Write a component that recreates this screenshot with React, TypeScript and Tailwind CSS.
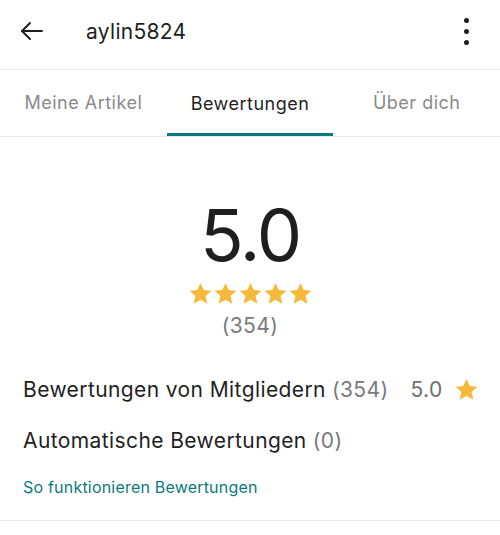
import React from "react";

const Star = ({ size }: { size: number }) => (
  <svg width={size} height={size} viewBox="0 0 24 24" aria-hidden className="shrink-0">
    <path
      d="M12 1.8l3.1 6.9 7.4.7-5.6 5 1.7 7.4L12 17.9l-6.6 3.9 1.7-7.4-5.6-5 7.4-.7z"
      fill="#f6b93b"
    />
  </svg>
);

export default function App() {
  return (
    <div className="w-[500px] h-[535px] bg-white overflow-hidden" style={{ fontFamily: "Inter, 'Noto Sans', sans-serif" }}>
      {/* Header */}
      <div className="h-[70px] flex items-center border-b border-[#e8e8e8] pb-[7px]">
        <div className="w-[86px] pl-[20px] flex items-center">
          <svg width="24" height="24" viewBox="0 0 24 24" fill="none" stroke="#1f1f1f" strokeWidth="2" strokeLinecap="round" strokeLinejoin="round">
            <path d="M22 12H2" />
            <path d="M10 4l-8 8 8 8" />
          </svg>
        </div>
        <div className="flex-1 text-[21px] tracking-[0.3px] text-[#1f1f1f] leading-none">aylin5824</div>
        <div className="w-[68px] flex flex-col items-center gap-[6px]">
          <span className="w-[5px] h-[5px] rounded-full bg-[#1f1f1f]" />
          <span className="w-[5px] h-[5px] rounded-full bg-[#1f1f1f]" />
          <span className="w-[5px] h-[5px] rounded-full bg-[#1f1f1f]" />
        </div>
      </div>
      {/* Tabs */}
      <div className="flex h-[67px] border-b border-[#e8e8e8]">
        <div className="flex-1 flex items-center justify-center text-[18px] tracking-[0.5px] text-[#8a8a8a] pb-[1px]">Meine Artikel</div>
        <div className="flex-1 flex flex-col">
          <div className="flex-1 flex items-center justify-center text-[18px] tracking-[0.5px] text-[#1f1f1f] pt-[3px]">Bewertungen</div>
          <div className="h-[3px] bg-[#0b7a80]" />
        </div>
        <div className="flex-1 flex items-center justify-center text-[18px] tracking-[0.5px] text-[#8a8a8a] pb-[1px]">Über dich</div>
      </div>
      {/* Rating */}
      <div className="flex flex-col items-center pt-[62px]">
        <div className="text-[72px] leading-none tracking-[-2px] text-[#1f1f1f]">5.0</div>
        <div className="flex mt-[10px]">
          <Star size={25} />
          <Star size={25} />
          <Star size={25} />
          <Star size={25} />
          <Star size={25} />
        </div>
        <div className="text-[21px] tracking-[0.4px] text-[#7a7a7a] mt-[9px] leading-none">(354)</div>
      </div>
      {/* Rows */}
      <div className="px-[23px] pt-[41px]">
        <div className="flex items-center whitespace-nowrap text-[21px] tracking-[0.4px] leading-none">
          <span className="shrink-0 text-[#1f1f1f]">Bewertungen von Mitgliedern</span>
          <span className="shrink-0 text-[#7a7a7a] ml-[6px]">(354)</span>
          <span className="shrink-0 text-[#6f6f6f] ml-[22px]">5.0</span>
          <span className="shrink-0 ml-[11px] flex"><Star size={25} /></span>
        </div>
        <div className="flex items-center whitespace-nowrap text-[21px] tracking-[0.4px] leading-none mt-[28px]">
          <span className="text-[#1f1f1f]">Automatische Bewertungen</span>
          <span className="text-[#7a7a7a] ml-[6px]">(0)</span>
        </div>
        <div className="text-[16px] tracking-[0.2px] text-[#0b7a80] mt-[28px] leading-none">So funktionieren Bewertungen</div>
      </div>
      <div className="mt-[25px] border-b border-[#e8e8e8]" />
    </div>
  );
}
